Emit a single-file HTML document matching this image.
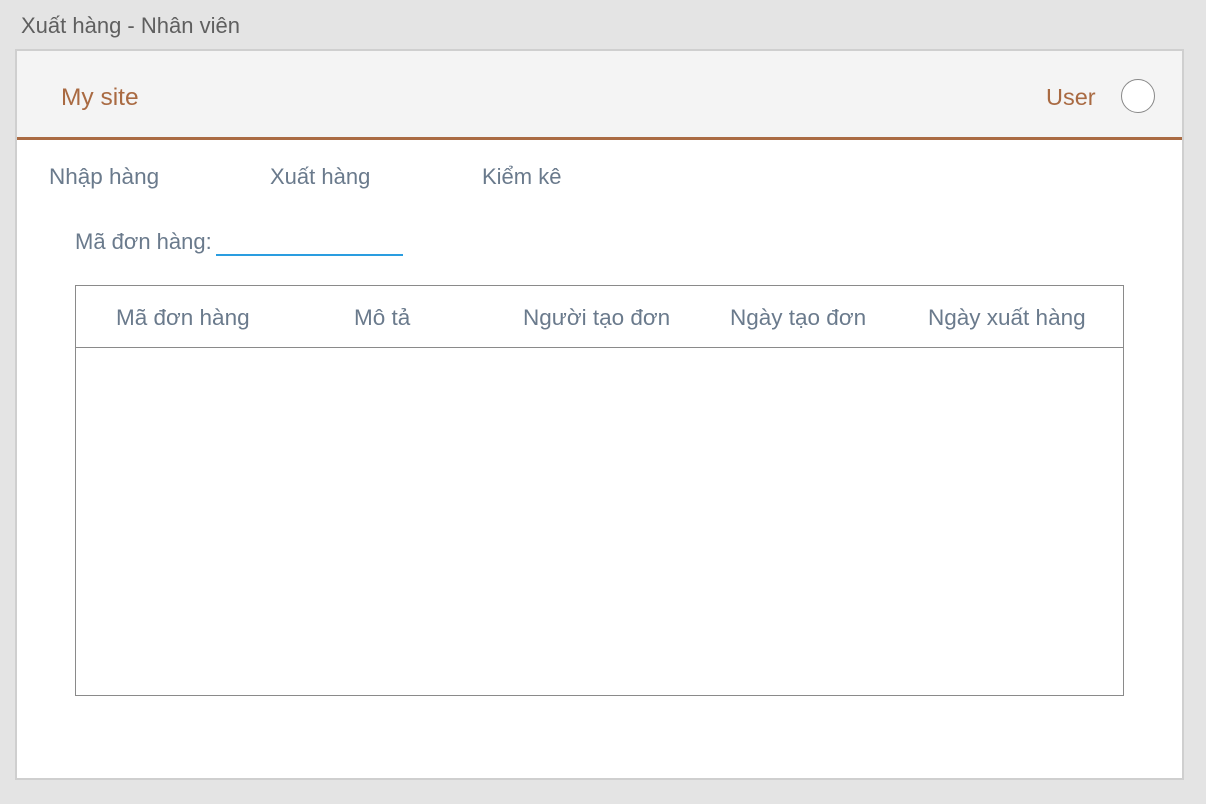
<!DOCTYPE html>
<html><head><meta charset="utf-8"><style>
body{margin:0;width:1206px;height:804px;background:#e4e4e4;font-family:"Liberation Sans",sans-serif;position:relative;overflow:hidden}
.a{position:absolute;white-space:nowrap}
</style></head><body>
<div class="a" style="left:21px;top:13px;font-size:22px;color:#5f5f5f">Xuất hàng - Nhân viên</div>
<div class="a" style="left:15px;top:49px;width:1165px;height:727px;border:2px solid #cfcfcf;background:#fff"></div>
<div class="a" style="left:17px;top:51px;width:1165px;height:86px;background:#f4f4f4"></div>
<div class="a" style="left:17px;top:137px;width:1165px;height:3px;background:#aa6b43"></div>
<div class="a" style="left:61px;top:84px;font-size:24.5px;color:#a96a42">My site</div>
<div class="a" style="left:1046px;top:84px;font-size:23.5px;color:#a96a42">User</div>
<div class="a" style="left:1121px;top:79px;width:32px;height:32px;border:1px solid #888;border-radius:50%;background:#fff"></div>
<div class="a" style="left:49px;top:164px;font-size:22.5px;color:#6a7a8c">Nhập hàng</div>
<div class="a" style="left:270px;top:164px;font-size:22px;color:#6a7a8c">Xuất hàng</div>
<div class="a" style="left:482px;top:164px;font-size:22px;color:#6a7a8c">Kiểm kê</div>
<div class="a" style="left:75px;top:229px;font-size:22px;color:#6a7a8c">Mã đơn hàng:</div>
<div class="a" style="left:216px;top:254px;width:187px;height:2px;background:#2a9de0"></div>
<div class="a" style="left:75px;top:285px;width:1047px;height:409px;border:1px solid #8a8a8a"></div>
<div class="a" style="left:76px;top:347px;width:1047px;height:1px;background:#8a8a8a"></div>
<div class="a" style="left:116px;top:305px;font-size:22.5px;color:#6a7a8c">Mã đơn hàng</div>
<div class="a" style="left:354px;top:305px;font-size:22.5px;color:#6a7a8c">Mô tả</div>
<div class="a" style="left:523px;top:305px;font-size:22.5px;color:#6a7a8c">Người tạo đơn</div>
<div class="a" style="left:730px;top:305px;font-size:22.5px;color:#6a7a8c">Ngày tạo đơn</div>
<div class="a" style="left:928px;top:305px;font-size:22.5px;color:#6a7a8c">Ngày xuất hàng</div>
</body></html>
